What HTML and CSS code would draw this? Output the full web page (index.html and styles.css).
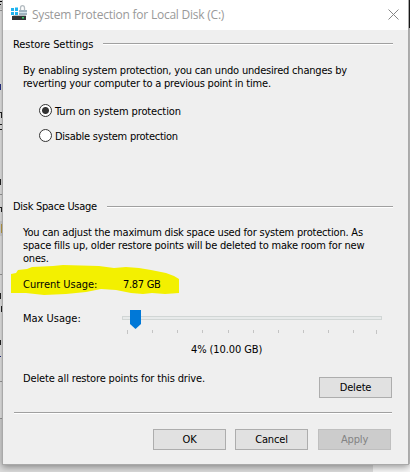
FILE: index.html
```html
<!DOCTYPE html>
<html lang="en">
<head>
    <meta charset="UTF-8">
    <meta name="viewport" content="width=device-width, initial-scale=1.0">
    <title>System Protection for Local Disk (C:)</title>
    <link rel="stylesheet" href="styles.css">
</head>
<body>
    <!-- Window behind the dialog -->
    <svg class="backdrop" width="410" height="472" shape-rendering="crispEdges">
        <rect width="410" height="472" fill="#dcdcdc"/>
        <rect width="3" height="418" fill="#efefef"/>
        <rect width="3" height="9" fill="#d9d9d9"/>
        <path d="M0 1h2v1h-2zM0 4h1v1h-1z" fill="#000"/>
        <path d="M0 10.5h2M0 194.5h2M0 274.5h2M0 381.5h2M0 418.5h3" stroke="#a0a0a0"/>
        <rect y="221" width="3" height="15" fill="#ddd"/>
        <rect x="1" y="224" width="1" height="9" fill="#c9a84a"/>
        <path d="M0 84h1v6h-1zM0 356h1v1h-1z" fill="#25308a"/>
        <path d="M0 112h2v1h-2zM1 113h1v5h-1zM0 124h2v1h-2zM0 129h2v1h-2zM0 179h1v6h-1zM0 207h2v1h-2zM1 208h1v4h-1zM0 293h1v6h-1zM1 306h1v6h-1zM0 340h1v5h-1z" fill="#222"/>
        <rect x="373" y="464" width="37" height="8" fill="#f7f7f7"/>
        <rect x="408" width="2" height="28" fill="#1c1c1c"/>
        <rect x="409" y="28" width="1" height="436" fill="#d2d2d2"/>
    </svg>

    <div class="dialog">
        <div class="titlebar">
            <svg class="app-icon" width="16" height="16" viewBox="0 0 16 16">
                <path d="M0 3h3v3H0zM4 2.5h3V6H4zM0 7h3v3H0zM4 7h3v3.5H4z" fill="#1eb4f0"/>
                <path d="M9.5 5V3q0-2.300 2-2.300t2 2.300v2" fill="none" stroke="#b4bcc1" stroke-width="1.300"/>
                <rect x="8" y="5" width="8" height="5" fill="#9fb3bf"/>
                <path d="M8 7.500h8" stroke="#d3e2ea"/>
                <path d="M2.500 10h12l1 1.500H1.500z" fill="#b9bec1"/>
                <rect x="1" y="11" width="14" height="4" fill="#303436"/>
                <rect x="11" y="12" width="2" height="1.500" fill="#37d067"/>
            </svg>
            <h1>System Protection for Local Disk (C:)</h1>
            <svg class="close" width="11" height="11" viewBox="0 0 11 11">
                <path d="M.5.5l10 10M10.500.5l-10 10" stroke="#858585" fill="none"/>
            </svg>
        </div>

        <div class="group-title restore-title"><span>Restore Settings</span></div>
        <p class="restore-text">By enabling system protection, you can undo undesired changes by<br>reverting your computer to a previous point in time.</p>
        <div class="options">
            <div class="option"><i class="radio checked"></i><span class="turn-on">Turn on system protection</span></div>
            <div class="option"><i class="radio"></i><span class="disable">Disable system protection</span></div>
        </div>

        <div class="group-title disk-title"><span>Disk Space Usage</span></div>
        <p class="disk-text">You can adjust the maximum disk space used for system protection. As<br>space fills up, older restore points will be deleted to make room for new<br>ones.</p>

        <div class="usage">
            <svg class="marker" width="168" height="30" viewBox="0 0 168 30">
                <path d="M0 9l5-1 2-3 9-1 5-2L42 1l10-1 36 1 15 2 12-1 13 1 12 2 15 3 8 3 5 3v14l-14 1-13-1-9 1-12-1-15-3-15-1-15 3-20 2-22 1-18-2H0z" fill="#f3f000"/>
            </svg>
            <span class="label">Current Usage:</span>
            <span class="value">7.87 GB</span>
        </div>

        <div class="max-usage">
            <span class="label">Max Usage:</span>
            <svg class="slider" width="262" height="24" viewBox="0 0 262 24">
                <rect x=".5" y="6.500" width="259" height="3" fill="#e7eaea" stroke="#d1d6d5"/>
                <path d="M8 0h11v14l-5.500 5L8 14z" fill="#0078d7"/>
                <path d="M5.500 20v4M30.500 20v3M55.500 20v3M80.500 20v3M106.500 20v3M131.500 20v3M156.500 20v3M181.500 20v3M206.500 20v3M231.500 20v3M254.500 20v4" stroke="#c4c4c4"/>
            </svg>
        </div>
        <div class="amount"><span>4% (10.00 GB)</span></div>

        <div class="delete-row">
            <span>Delete all restore points for this drive.</span>
            <button class="delete">Delete</button>
        </div>

        <div class="footer">
            <button class="ok">OK</button>
            <button class="cancel">Cancel</button>
            <button class="apply" disabled>Apply</button>
        </div>
    </div>
</body>
</html>
```
FILE: styles.css
```css
* {
    box-sizing: border-box;
}
body {
    margin: 0;
    width: 410px;
    height: 472px;
    overflow: hidden;
    font: 11px/13px "DejaVu Sans Condensed", "DejaVu Sans", sans-serif;
    font-stretch: condensed;
    color: #000;
}
.backdrop {
    position: absolute;
    top: 0;
    left: 0;
}
.dialog {
    position: relative;
    width: 407px;
    height: 465px;
    margin-left: 2px;
    border: 1px solid #a9a9a9;
    border-top: 0;
    background: #efefef;
    box-shadow: 0 2px 7px rgba(0, 0, 0, 0.4);
    white-space: nowrap;
}
.titlebar {
    display: flex;
    align-items: center;
    height: 30px;
    padding: 0 9px 0 8px;
    background: #fff;
}
.app-icon {
    margin-top: -4px;
}
.titlebar h1 {
    margin: 0 0 0 5px;
    font: 12px/16px "Open Sans", sans-serif;
    letter-spacing: -0.23px;
    color: #999;
}
.close {
    margin: -2px 0 0 auto;
}
.group-title {
    display: flex;
    align-items: center;
    height: 13px;
    margin: 0 15px 0 10px;
}
.group-title::after {
    content: "";
    flex: 1;
    height: 1px;
    margin: -1px 0 0 10px;
    background: #a0a0a0;
    border-bottom: 1px solid #fff;
}
.restore-title {
    margin-top: 8px;
    letter-spacing: -0.06px;
}
p {
    margin: 0 0 0 20px;
    letter-spacing: -0.2px;
}
.restore-text {
    margin-top: 13px;
}
.options {
    margin: 15px 0 0 36px;
}
.option {
    display: flex;
    align-items: center;
    height: 13px;
    margin-bottom: 12px;
}
.radio {
    width: 13px;
    height: 13px;
    margin: -2px 3px 0 0;
    border: 1px solid #333;
    border-radius: 50%;
    background: #fff;
}
.radio.checked {
    background: radial-gradient(circle, #333 3px, #fff 4px);
}
.turn-on {
    letter-spacing: -0.12px;
}
.disable {
    letter-spacing: -0.26px;
}
.disk-title {
    margin-top: 57px;
    letter-spacing: -0.3px;
}
.disk-title::after {
    margin-top: 1px;
}
.disk-text {
    margin-top: 13px;
}
.usage {
    position: relative;
    display: flex;
    height: 13px;
    margin: 13px 0 0 20px;
}
.label {
    position: relative;
    width: 100px;
}
.value {
    position: relative;
    letter-spacing: -0.3px;
}
.marker {
    position: absolute;
    left: -12px;
    top: -13px;
}
.max-usage {
    display: flex;
    height: 24px;
    margin: 19px 0 0 20px;
}
.max-usage .label {
    width: 99px;
    padding-top: 2px;
}
.amount {
    margin: 9px 0 0 188px;
    letter-spacing: -0.1px;
}
.delete-row {
    display: flex;
    justify-content: space-between;
    margin: 16px 16px 0 20px;
    letter-spacing: -0.15px;
}
.delete-row .delete {
    margin-top: 5px;
}
button {
    width: 73px;
    height: 21px;
    padding: 0;
    border: 1px solid #adadad;
    background: #e1e1e1;
    font: inherit;
    letter-spacing: -0.15px;
    color: #000;
}
button:disabled {
    border-color: #bfbfbf;
    background: #ccc;
    color: #838383;
}
.footer {
    display: flex;
    justify-content: flex-end;
    gap: 10px;
    margin: 14px 16px 0 11px;
    padding: 16px 1px 0 0;
    border-top: 1px solid #a0a0a0;
    box-shadow: inset 0 1px #fff;
}
.footer .ok {
    margin-right: -1px;
}
```
